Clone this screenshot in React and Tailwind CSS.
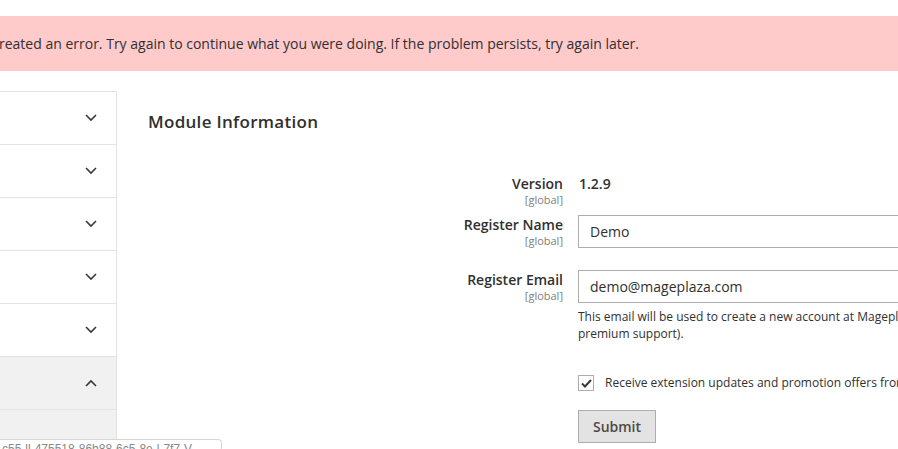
import React from "react";

function Chevron({ up }) {
  return (
    <svg width="12" height="8" viewBox="0 0 12 8" className="block">
      <path
        d={up ? "M1 7 L6 2 L11 7" : "M1 1 L6 6 L11 1"}
        fill="none"
        stroke="#41362f"
        strokeWidth="1.6"
      />
    </svg>
  );
}

function NavRow({ up, active }) {
  return (
    <div
      className={
        "h-[53px] border-b border-[#e3e3e3] flex items-center justify-end pr-[19px] " +
        (active ? "bg-[#f1f1f1]" : "bg-white")
      }
    >
      <Chevron up={up} />
    </div>
  );
}

function Label({ text }) {
  return (
    <div className="w-[461px] shrink-0 pr-[15px] text-right">
      <div className="text-[14px] leading-[18px] font-semibold text-[#303030]">{text}</div>
      <div className="text-[11px] leading-[13px] text-[#808080]">[global]</div>
    </div>
  );
}

export default function App() {
  return (
    <div
      className="w-[898px] h-[449px] overflow-hidden bg-white relative text-[#303030]"
      style={{ fontFamily: '"Open Sans", "Liberation Sans", sans-serif' }}
    >
      <div className="h-[16px]" />
      <div className="h-[55px] bg-[#ffcaca] flex items-center whitespace-nowrap">
        <span className="text-[14px] ml-[-1px] text-[#303030]">
          reated an error. Try again to continue what you were doing. If the problem persists, try again later.
        </span>
      </div>
      <div className="h-[20px]" />
      <div className="flex">
        <div className="w-[117px] shrink-0 border-t border-r border-[#e3e3e3] h-[400px]">
          <NavRow />
          <NavRow />
          <NavRow />
          <NavRow />
          <NavRow />
          <NavRow up active />
          <div className="h-[60px] bg-[#f1f1f1]" />
        </div>
        <div className="flex-1 whitespace-nowrap">
          <div className="pl-[31px] pt-[19px] text-[17px] leading-[23px] font-semibold tracking-[0.3px] text-[#303030]">
            Module Information
          </div>
          <div className="mt-[42px] flex">
            <Label text="Version" />
            <div className="text-[14px] leading-[18px] font-semibold text-[#303030] pl-[1px]">1.2.9</div>
          </div>
          <div className="mt-[9px] flex">
            <div className="pt-[1px]">
              <Label text="Register Name" />
            </div>
            <div className="w-[400px] h-[33px] border border-[#adadad] flex items-center px-[11px] text-[14px]">
              Demo
            </div>
          </div>
          <div className="mt-[22px] flex">
            <div className="pt-[1px]">
              <Label text="Register Email" />
            </div>
            <div>
              <div className="w-[400px] h-[33px] border border-[#adadad] flex items-center px-[11px] text-[14px]">
                demo@mageplaza.com
              </div>
              <div className="mt-[5px] text-[12px] leading-[17px] text-[#303030]">
                This email will be used to create a new account at Mageplaza.com (to download purchased extensions and get our
                <br />
                premium support).
              </div>
            </div>
          </div>
          <div className="mt-[32px] flex">
            <div className="w-[461px] shrink-0" />
            <div className="flex items-center">
              <div className="w-[16px] h-[16px] border border-[#adadad] bg-white flex items-center justify-center">
                <svg width="11" height="9" viewBox="0 0 11 9">
                  <path d="M1 4.5 L4 7.5 L10 1" fill="none" stroke="#41362f" strokeWidth="2" />
                </svg>
              </div>
              <span className="ml-[11px] text-[12px] leading-[18px] text-[#303030]">
                Receive extension updates and promotion offers from Mageplaza
              </span>
            </div>
          </div>
          <div className="mt-[18px] flex">
            <div className="w-[461px] shrink-0" />
            <button className="w-[78px] h-[33px] bg-[#e3e3e3] border border-[#adadad] text-[14px] font-semibold text-[#514943]">
              Submit
            </button>
          </div>
        </div>
      </div>
      <div className="absolute left-0 top-[439px] w-[222px] h-[20px] bg-white border-t border-r border-[#d6d6d6] rounded-tr-[4px] overflow-hidden">
        <div
          className="pl-[2px] pt-[2px] text-[12px] leading-[14px] text-[#888] whitespace-nowrap"
          style={{ fontFamily: '"Liberation Sans", sans-serif' }}
        >
          c55-ll-475518-86b88-6c5-8e-l-7f7-V
        </div>
      </div>
    </div>
  );
}
